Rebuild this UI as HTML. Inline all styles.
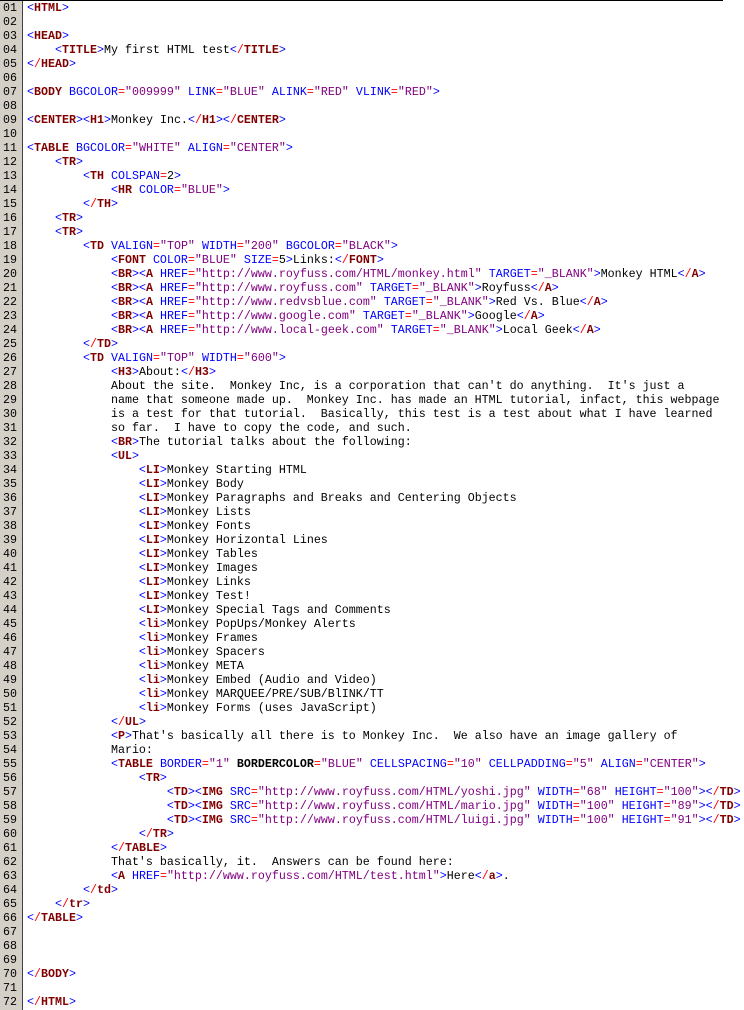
<!DOCTYPE html>
<html><head><meta charset="utf-8"><style>
html,body{margin:0;padding:0;background:#fff;width:744px;height:1010px;overflow:hidden}
#top{position:absolute;left:0;top:0;width:723px;height:1px;background:#000}
#g{position:absolute;left:0;top:1px;width:22px;height:1009px;background:#d4d0c8;border-right:1px solid #404040}
pre{margin:0;font-family:"Liberation Mono",monospace;font-size:11.667px;line-height:14px;tab-size:4;-moz-tab-size:4}
#g pre{padding-left:3px;color:#000;margin-top:0px}
#c{position:absolute;left:27px;top:1px}
k{color:#0000ff}n{color:#800000;font-weight:bold}r{color:#ff0000}v{color:#800080}w{font-weight:bold;color:#000}
</style></head><body>
<div id="top"></div>
<div id="g"><pre>01
02
03
04
05
06
07
08
09
10
11
12
13
14
15
16
17
18
19
20
21
22
23
24
25
26
27
28
29
30
31
32
33
34
35
36
37
38
39
40
41
42
43
44
45
46
47
48
49
50
51
52
53
54
55
56
57
58
59
60
61
62
63
64
65
66
67
68
69
70
71
72</pre></div>
<div id="c"><pre><k>&lt;</k><n>HTML</n><k>&gt;</k>

<k>&lt;</k><n>HEAD</n><k>&gt;</k>
	<k>&lt;</k><n>TITLE</n><k>&gt;</k>My first HTML test<k>&lt;</k><r>/</r><n>TITLE</n><k>&gt;</k>
<k>&lt;</k><r>/</r><n>HEAD</n><k>&gt;</k>

<k>&lt;</k><n>BODY</n> <k>BGCOLOR</k><r>=</r><v>"009999"</v> <k>LINK</k><r>=</r><v>"BLUE"</v> <k>ALINK</k><r>=</r><v>"RED"</v> <k>VLINK</k><r>=</r><v>"RED"</v><k>&gt;</k>

<k>&lt;</k><n>CENTER</n><k>&gt;&lt;</k><n>H1</n><k>&gt;</k>Monkey Inc.<k>&lt;</k><r>/</r><n>H1</n><k>&gt;&lt;</k><r>/</r><n>CENTER</n><k>&gt;</k>

<k>&lt;</k><n>TABLE</n> <k>BGCOLOR</k><r>=</r><v>"WHITE"</v> <k>ALIGN</k><r>=</r><v>"CENTER"</v><k>&gt;</k>
	<k>&lt;</k><n>TR</n><k>&gt;</k>
		<k>&lt;</k><n>TH</n> <k>COLSPAN</k><r>=</r>2<k>&gt;</k>
			<k>&lt;</k><n>HR</n> <k>COLOR</k><r>=</r><v>"BLUE"</v><k>&gt;</k>
		<k>&lt;</k><r>/</r><n>TH</n><k>&gt;</k>
	<k>&lt;</k><n>TR</n><k>&gt;</k>
	<k>&lt;</k><n>TR</n><k>&gt;</k>
		<k>&lt;</k><n>TD</n> <k>VALIGN</k><r>=</r><v>"TOP"</v> <k>WIDTH</k><r>=</r><v>"200"</v> <k>BGCOLOR</k><r>=</r><v>"BLACK"</v><k>&gt;</k>
			<k>&lt;</k><n>FONT</n> <k>COLOR</k><r>=</r><v>"BLUE"</v> <k>SIZE</k><r>=</r>5<k>&gt;</k>Links:<k>&lt;</k><r>/</r><n>FONT</n><k>&gt;</k>
			<k>&lt;</k><n>BR</n><k>&gt;&lt;</k><n>A</n> <k>HREF</k><r>=</r><v>"http://www.royfuss.com/HTML/monkey.html"</v> <k>TARGET</k><r>=</r><v>"_BLANK"</v><k>&gt;</k>Monkey HTML<k>&lt;</k><r>/</r><n>A</n><k>&gt;</k>
			<k>&lt;</k><n>BR</n><k>&gt;&lt;</k><n>A</n> <k>HREF</k><r>=</r><v>"http://www.royfuss.com"</v> <k>TARGET</k><r>=</r><v>"_BLANK"</v><k>&gt;</k>Royfuss<k>&lt;</k><r>/</r><n>A</n><k>&gt;</k>
			<k>&lt;</k><n>BR</n><k>&gt;&lt;</k><n>A</n> <k>HREF</k><r>=</r><v>"http://www.redvsblue.com"</v> <k>TARGET</k><r>=</r><v>"_BLANK"</v><k>&gt;</k>Red Vs. Blue<k>&lt;</k><r>/</r><n>A</n><k>&gt;</k>
			<k>&lt;</k><n>BR</n><k>&gt;&lt;</k><n>A</n> <k>HREF</k><r>=</r><v>"http://www.google.com"</v> <k>TARGET</k><r>=</r><v>"_BLANK"</v><k>&gt;</k>Google<k>&lt;</k><r>/</r><n>A</n><k>&gt;</k>
			<k>&lt;</k><n>BR</n><k>&gt;&lt;</k><n>A</n> <k>HREF</k><r>=</r><v>"http://www.local-geek.com"</v> <k>TARGET</k><r>=</r><v>"_BLANK"</v><k>&gt;</k>Local Geek<k>&lt;</k><r>/</r><n>A</n><k>&gt;</k>
		<k>&lt;</k><r>/</r><n>TD</n><k>&gt;</k>
		<k>&lt;</k><n>TD</n> <k>VALIGN</k><r>=</r><v>"TOP"</v> <k>WIDTH</k><r>=</r><v>"600"</v><k>&gt;</k>
			<k>&lt;</k><n>H3</n><k>&gt;</k>About:<k>&lt;</k><r>/</r><n>H3</n><k>&gt;</k>
			About the site.  Monkey Inc, is a corporation that can't do anything.  It's just a
			name that someone made up.  Monkey Inc. has made an HTML tutorial, infact, this webpage
			is a test for that tutorial.  Basically, this test is a test about what I have learned
			so far.  I have to copy the code, and such.
			<k>&lt;</k><n>BR</n><k>&gt;</k>The tutorial talks about the following:
			<k>&lt;</k><n>UL</n><k>&gt;</k>
				<k>&lt;</k><n>LI</n><k>&gt;</k>Monkey Starting HTML
				<k>&lt;</k><n>LI</n><k>&gt;</k>Monkey Body
				<k>&lt;</k><n>LI</n><k>&gt;</k>Monkey Paragraphs and Breaks and Centering Objects
				<k>&lt;</k><n>LI</n><k>&gt;</k>Monkey Lists
				<k>&lt;</k><n>LI</n><k>&gt;</k>Monkey Fonts
				<k>&lt;</k><n>LI</n><k>&gt;</k>Monkey Horizontal Lines
				<k>&lt;</k><n>LI</n><k>&gt;</k>Monkey Tables
				<k>&lt;</k><n>LI</n><k>&gt;</k>Monkey Images
				<k>&lt;</k><n>LI</n><k>&gt;</k>Monkey Links
				<k>&lt;</k><n>LI</n><k>&gt;</k>Monkey Test!
				<k>&lt;</k><n>LI</n><k>&gt;</k>Monkey Special Tags and Comments
				<k>&lt;</k><n>li</n><k>&gt;</k>Monkey PopUps/Monkey Alerts
				<k>&lt;</k><n>li</n><k>&gt;</k>Monkey Frames
				<k>&lt;</k><n>li</n><k>&gt;</k>Monkey Spacers
				<k>&lt;</k><n>li</n><k>&gt;</k>Monkey META
				<k>&lt;</k><n>li</n><k>&gt;</k>Monkey Embed (Audio and Video)
				<k>&lt;</k><n>li</n><k>&gt;</k>Monkey MARQUEE/PRE/SUB/BlINK/TT
				<k>&lt;</k><n>li</n><k>&gt;</k>Monkey Forms (uses JavaScript)
			<k>&lt;</k><r>/</r><n>UL</n><k>&gt;</k>
			<k>&lt;</k><n>P</n><k>&gt;</k>That's basically all there is to Monkey Inc.  We also have an image gallery of
			Mario:
			<k>&lt;</k><n>TABLE</n> <k>BORDER</k><r>=</r><v>"1"</v> <w>BORDERCOLOR</w><r>=</r><v>"BLUE"</v> <k>CELLSPACING</k><r>=</r><v>"10"</v> <k>CELLPADDING</k><r>=</r><v>"5"</v> <k>ALIGN</k><r>=</r><v>"CENTER"</v><k>&gt;</k>
				<k>&lt;</k><n>TR</n><k>&gt;</k>
					<k>&lt;</k><n>TD</n><k>&gt;&lt;</k><n>IMG</n> <k>SRC</k><r>=</r><v>"http://www.royfuss.com/HTML/yoshi.jpg"</v> <k>WIDTH</k><r>=</r><v>"68"</v> <k>HEIGHT</k><r>=</r><v>"100"</v><k>&gt;&lt;</k><r>/</r><n>TD</n><k>&gt;</k>
					<k>&lt;</k><n>TD</n><k>&gt;&lt;</k><n>IMG</n> <k>SRC</k><r>=</r><v>"http://www.royfuss.com/HTML/mario.jpg"</v> <k>WIDTH</k><r>=</r><v>"100"</v> <k>HEIGHT</k><r>=</r><v>"89"</v><k>&gt;&lt;</k><r>/</r><n>TD</n><k>&gt;</k>
					<k>&lt;</k><n>TD</n><k>&gt;&lt;</k><n>IMG</n> <k>SRC</k><r>=</r><v>"http://www.royfuss.com/HTML/luigi.jpg"</v> <k>WIDTH</k><r>=</r><v>"100"</v> <k>HEIGHT</k><r>=</r><v>"91"</v><k>&gt;&lt;</k><r>/</r><n>TD</n><k>&gt;</k>
				<k>&lt;</k><r>/</r><n>TR</n><k>&gt;</k>
			<k>&lt;</k><r>/</r><n>TABLE</n><k>&gt;</k>
			That's basically, it.  Answers can be found here:
			<k>&lt;</k><n>A</n> <k>HREF</k><r>=</r><v>"http://www.royfuss.com/HTML/test.html"</v><k>&gt;</k>Here<k>&lt;</k><r>/</r><n>a</n><k>&gt;</k>.
		<k>&lt;</k><r>/</r><n>td</n><k>&gt;</k>
	<k>&lt;</k><r>/</r><n>tr</n><k>&gt;</k>
<k>&lt;</k><r>/</r><n>TABLE</n><k>&gt;</k>



<k>&lt;</k><r>/</r><n>BODY</n><k>&gt;</k>

<k>&lt;</k><r>/</r><n>HTML</n><k>&gt;</k></pre></div>
</body></html>
